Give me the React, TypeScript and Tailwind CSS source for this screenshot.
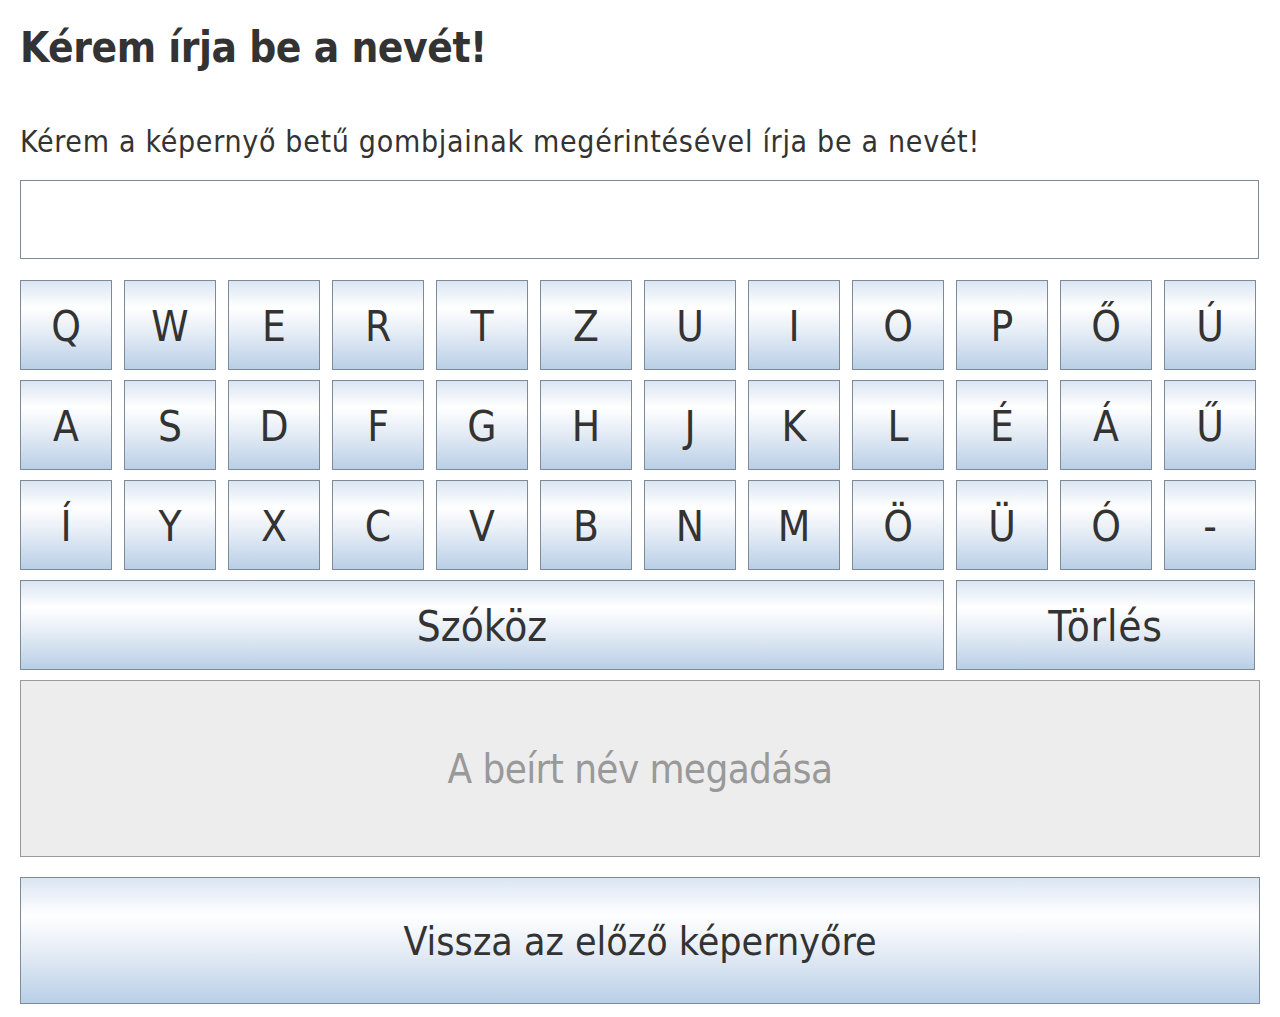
import React from "react";

const rows = [
  ["Q", "W", "E", "R", "T", "Z", "U", "I", "O", "P", "Ő", "Ú"],
  ["A", "S", "D", "F", "G", "H", "J", "K", "L", "É", "Á", "Ű"],
  ["Í", "Y", "X", "C", "V", "B", "N", "M", "Ö", "Ü", "Ó", "-"],
];

const btn =
  "flex items-center justify-center border border-[#7d8b99] bg-[linear-gradient(to_bottom,#dae5f2_0%,#ffffff_30%,#e9eff7_55%,#b9cfe6_100%)] text-[#333333]";

export default function App() {
  return (
    <div
      className="min-h-[1017px] bg-white pl-[20px] pt-[24px]"
      style={{ fontFamily: '"DejaVu Sans Condensed", "DejaVu Sans", sans-serif' }}
    >
      <h1 className="m-0 text-[42px] font-bold leading-[48px] tracking-[-0.45px] text-[#333333]">
        Kérem írja be a nevét!
      </h1>
      <p className="mt-[52px] text-[30px] leading-[36px] tracking-[0.7px] text-[#333333]">
        Kérem a képernyő betű gombjainak megérintésével írja be a nevét!
      </p>
      <div className="mt-[20px] h-[79px] w-[1239px] border border-[#7d8b99] bg-white" />
      <div className="mt-[21px] flex flex-col gap-[10px]">
        {rows.map((r, i) => (
          <div key={i} className="flex gap-[12px]">
            {r.map((k) => (
              <div key={k} className={`${btn} h-[90px] w-[92px] pt-[2px] text-[42px]`}>
                {k}
              </div>
            ))}
          </div>
        ))}
        <div className="flex gap-[12px]">
          <div className={`${btn} h-[90px] w-[924px] pt-[2px] text-[42px]`}>Szóköz</div>
          <div className={`${btn} h-[90px] w-[299px] pt-[2px] text-[42px] tracking-[0.8px]`}>Törlés</div>
        </div>
      </div>
      <div className="mt-[10px] flex h-[177px] w-[1240px] items-center justify-center border border-[#999999] bg-[#ededed] text-[40px] tracking-[-0.6px] text-[#999999]">
        A beírt név megadása
      </div>
      <div className={`${btn} mt-[20px] h-[127px] w-[1240px] pt-[3px] text-[39px]`}>Vissza az előző képernyőre</div>
    </div>
  );
}
